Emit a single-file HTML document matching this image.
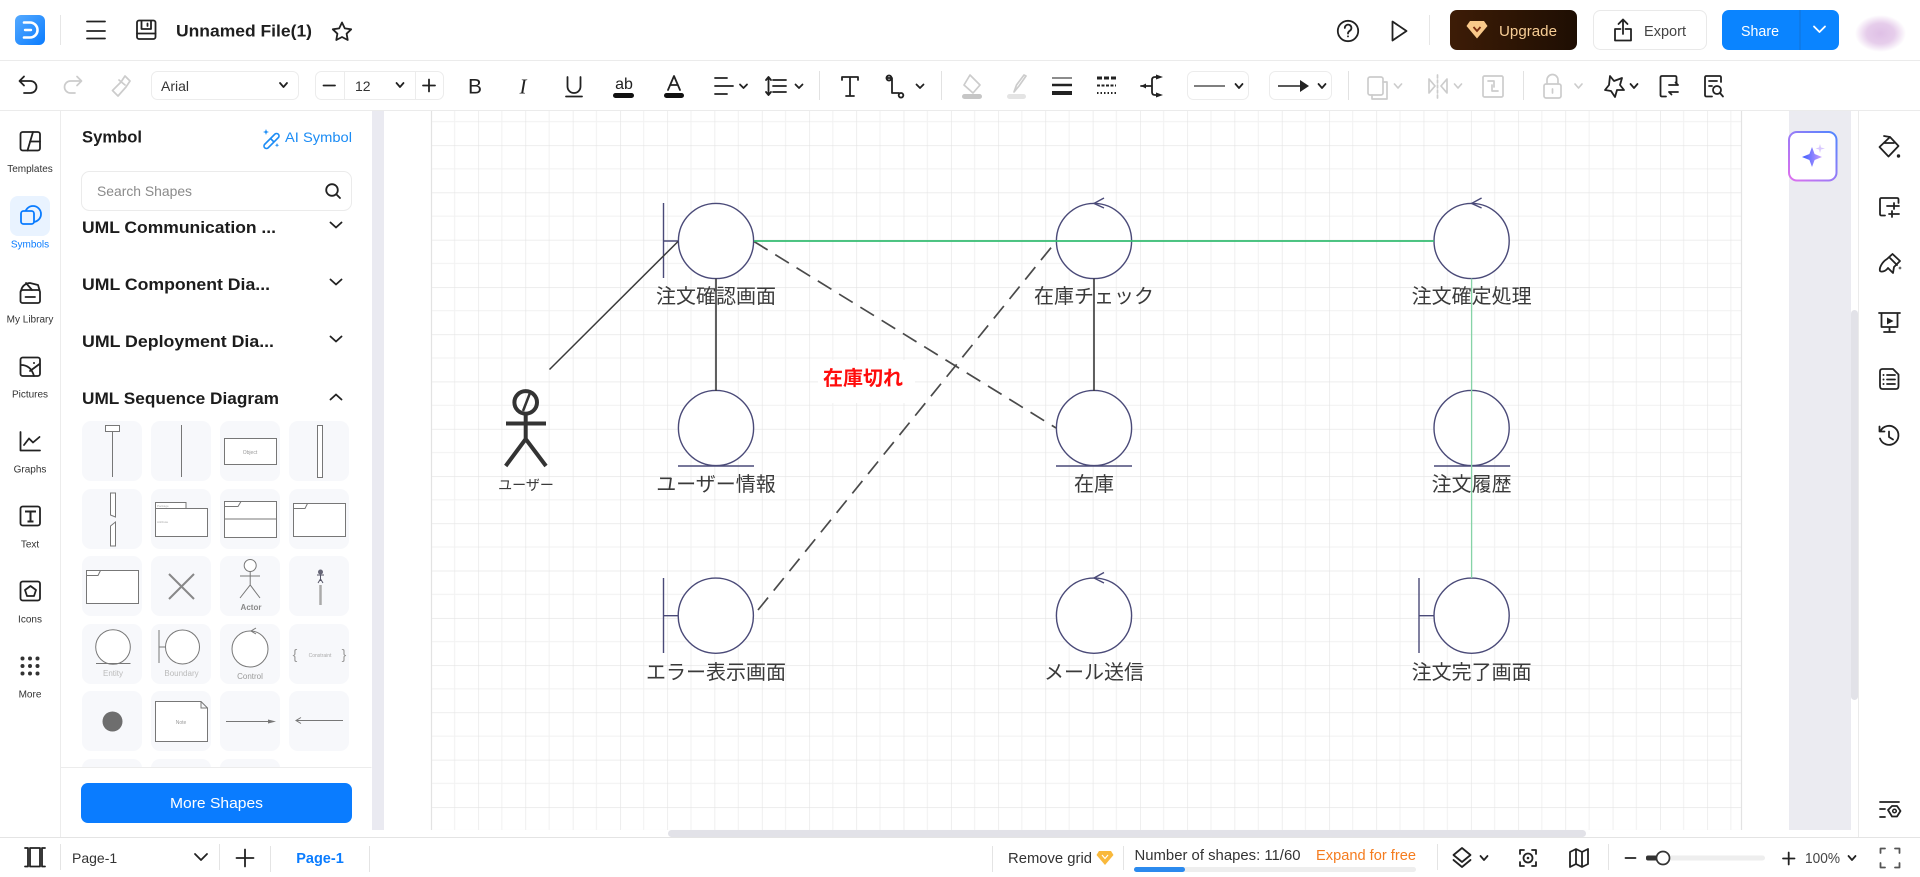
<!DOCTYPE html>
<html lang="en"><head><meta charset="utf-8"><title>Unnamed File(1)</title>
<style>
html,body{margin:0;padding:0;width:1920px;height:877px;overflow:hidden;background:#fff}
svg{display:block;position:absolute;left:0;top:0}
text{font-family:"Liberation Sans","Noto Sans CJK JP",sans-serif}
.i{fill:none;stroke:#222;stroke-width:1.8;stroke-linecap:round;stroke-linejoin:round}
.d{fill:none;stroke:#ccc;stroke-width:1.7;stroke-linecap:round;stroke-linejoin:round}
.g{fill:none;stroke:#777;stroke-width:1}
.w{fill:#fff;stroke:#777;stroke-width:1}
.s{fill:#fff;stroke:#4a4a78;stroke-width:1.4}
.sl{stroke:#4a4a78;stroke-width:1.4;fill:none}
.lb{font-size:20px;fill:#3a3a3a;text-anchor:middle}
.rl{font-size:10px;fill:#333;text-anchor:middle}
.h{font-size:17px;font-weight:700;fill:#1c1c1c}
</style></head><body>
<svg width="1920" height="877" viewBox="0 0 1920 877" xmlns="http://www.w3.org/2000/svg">
<defs>
<linearGradient id="lg" x1="0" y1="0" x2="1" y2="1"><stop offset="0" stop-color="#55aaff"/><stop offset="1" stop-color="#0a7cff"/></linearGradient>
<linearGradient id="up" x1="0" y1="0" x2="1" y2="0"><stop offset="0" stop-color="#3d1c06"/><stop offset="1" stop-color="#1e0e03"/></linearGradient>
<linearGradient id="ai" x1="1" y1="0" x2="0" y2="1"><stop offset="0" stop-color="#4f86ff"/><stop offset="1" stop-color="#e070ee"/></linearGradient>
<linearGradient id="st" x1="0" y1="0" x2="1" y2="0"><stop offset="0" stop-color="#3b5cff"/><stop offset="1" stop-color="#c9a0ff"/></linearGradient>
<radialGradient id="av"><stop offset="0" stop-color="#dfc0e6"/><stop offset=".55" stop-color="#e6cdeb"/><stop offset="1" stop-color="#fff"/></radialGradient>
<pattern id="grid" x="431" y="98" width="47.27" height="47.27" patternUnits="userSpaceOnUse">
<path d="M23.63 0V47.27M0 23.63H47.27" stroke="#f1f1f1" stroke-width="1" fill="none"/>
<path d="M0 0V47.27M0 0H47.27" stroke="#e3e3e3" stroke-width="1.2" fill="none"/>
</pattern>
<clipPath id="panelclip"><rect x="60" y="212" width="312" height="555"/></clipPath>
</defs>

<!-- canvas area -->
<rect x="372" y="111" width="12" height="719" fill="#eaeaf1"/>
<rect x="431" y="111" width="1311" height="719" fill="url(#grid)"/>
<path d="M431.5 111V830M1741.5 111V830" stroke="#e3e3e3" stroke-width="1.2"/>
<rect x="1789" y="111" width="62" height="719" fill="#ebebf1"/>
<rect x="1851" y="310" width="7" height="390" rx="3.5" fill="#e2e2e8"/>
<rect x="668" y="830" width="918" height="7" rx="3.5" fill="#e2e2e8"/>

<!-- diagram -->
<rect x="818" y="360" width="97" height="43" fill="#fff"/>
<g>
<circle class="s" cx="716" cy="241" r="37.6"/><path class="sl" d="M663.5 203V278M663.5 241H678"/>
<circle class="s" cx="716" cy="428" r="37.6"/><path class="sl" d="M678 466H754"/>
<circle class="s" cx="715.8" cy="615.7" r="37.6"/><path class="sl" d="M663.5 578V653M663.5 615.7H678"/>
<circle class="s" cx="1094" cy="241" r="37.6"/><path class="sl" d="M1104 198L1094 203.4L1104 208"/>
<circle class="s" cx="1094" cy="428" r="37.6"/><path class="sl" d="M1056 466H1132"/>
<circle class="s" cx="1094" cy="615.7" r="37.6"/><path class="sl" d="M1104 572.5L1094 578L1104 583"/>
<circle class="s" cx="1471.6" cy="241" r="37.6"/><path class="sl" d="M1481.6 198L1471.6 203.4L1481.6 208"/>
<circle class="s" cx="1471.6" cy="428" r="37.6"/><path class="sl" d="M1434 466H1510"/>
<circle class="s" cx="1471.6" cy="615.7" r="37.6"/><path class="sl" d="M1419 578V653M1419 615.7H1434"/>
</g>
<path d="M716 278.5V391M1094 278.5V391" stroke="#3a3a3a" stroke-width="1.6" fill="none"/>
<path d="M549.5 369.5L678 241.5" stroke="#3a3a3a" stroke-width="1.5" fill="none"/>
<path d="M754 241.5L1056 428M758 610L1056 241.5" stroke="#4a4a4a" stroke-width="1.7" stroke-dasharray="16 9" fill="none"/>
<path d="M754 241H1434" stroke="#35bd72" stroke-width="1.7" fill="none"/>
<path d="M1471.6 278.5V578" stroke="#86d3a7" stroke-width="1.3" fill="none"/>
<g fill="none" stroke="#333" stroke-width="4">
<circle cx="525.7" cy="402.4" r="11.3"/><path d="M530 393L523 411" stroke-width="2.5"/>
<path d="M525.7 414V439M506 423.5H546M505.7 466L525.7 439L546 466"/>
</g>
<text class="lb" x="716" y="303">注文確認画面</text>
<text class="lb" x="1094" y="303">在庫チェック</text>
<text class="lb" x="1471.6" y="303">注文確定処理</text>
<text class="lb" x="716" y="491">ユーザー情報</text>
<text class="lb" x="1094" y="491">在庫</text>
<text class="lb" x="1471.6" y="491">注文履歴</text>
<text class="lb" x="716" y="679">エラー表示画面</text>
<text class="lb" x="1094" y="679">メール送信</text>
<text class="lb" x="1471.6" y="679">注文完了画面</text>
<text x="526" y="490" font-size="14" fill="#3a3a3a" text-anchor="middle">ユーザー</text>
<text x="863" y="385" font-size="20" font-weight="700" fill="#ff0c0c" text-anchor="middle">在庫切れ</text>

<!-- AI button -->
<rect x="1789" y="132" width="47.5" height="48.5" rx="8" fill="#fff" stroke="url(#ai)" stroke-width="2"/>
<path d="M1812 147L1814.6 154L1822 157L1814.6 160L1812 167L1809.4 160L1802 157L1809.4 154Z" fill="url(#st)"/>
<path d="M1820 144L1821 147.5L1825 148.5L1821 149.5L1820 153L1819 149.5L1815.5 148.5L1819 147.5Z" fill="#d9c8ff"/>

<!-- top bar -->
<path d="M0 60.5H1920" stroke="#ebebeb"/>
<rect x="15" y="15" width="30" height="30" rx="6" fill="url(#lg)"/>
<path d="M24 22.5H30a7.5 7.5 0 0 1 0 15H24" fill="none" stroke="#fff" stroke-width="2.6" stroke-linecap="round"/>
<path d="M25 30H31" stroke="#fff" stroke-width="2.4" stroke-linecap="round"/>
<path d="M60.5 15V45M1429.5 15V45" stroke="#e6e6e6"/>
<path class="i" d="M87 21.5H105M87 31H105M87 38.5H105"/>
<rect class="i" x="137" y="20.5" width="18.5" height="18.5" rx="2"/>
<path class="i" d="M141.5 21V29H151V21M147.5 23.5V26M137 33.5H155.5"/>
<text x="176" y="36.5" font-size="17" font-weight="700" fill="#1f1f1f" textLength="136" lengthAdjust="spacingAndGlyphs">Unnamed File(1)</text>
<path class="i" stroke-width="1.5" d="M342 22.5L344.8 28.4L351.2 29.3L346.6 33.7L347.7 40L342 37L336.3 40L337.4 33.7L332.8 29.3L339.2 28.4Z"/>
<circle class="i" cx="1348" cy="31" r="10.2"/>
<path class="i" d="M1344.8 28a3.3 3.3 0 1 1 5 2.8c-1.2.8-1.8 1.3-1.8 2.8M1348 36.3v.2"/>
<path class="i" d="M1392.5 21.5L1406.5 31L1392.5 40.5Z"/>
<rect x="1450" y="10" width="127" height="40" rx="7" fill="url(#up)"/>
<path d="M1470 21H1484L1487.5 26L1477 38.5L1466.5 26Z" fill="#f9c98a"/>
<path d="M1473.5 27L1477 31L1480.5 27" stroke="#7a2d10" stroke-width="1.8" fill="none"/>
<text x="1499" y="36" font-size="15" fill="#f7cd95" textLength="58" lengthAdjust="spacingAndGlyphs">Upgrade</text>
<rect x="1593.5" y="10.5" width="113" height="39" rx="7" fill="#fff" stroke="#e9e9e9"/>
<path class="i" d="M1620.5 29H1615V40.5H1631V29H1625.5M1623 34V20M1618.5 24L1623 19.5L1627.5 24" stroke-width="1.5"/>
<text x="1644" y="36" font-size="15" fill="#444" textLength="42" lengthAdjust="spacingAndGlyphs">Export</text>
<rect x="1722" y="10" width="117" height="40" rx="7" fill="#0a84ff"/>
<path d="M1800 10V50" stroke="#1372d6" stroke-width="1"/>
<text x="1741" y="36" font-size="15" fill="#fff" textLength="38" lengthAdjust="spacingAndGlyphs">Share</text>
<path d="M1814 26.5L1819.5 32L1825 26.5" fill="none" stroke="#fff" stroke-width="1.8" stroke-linecap="round" stroke-linejoin="round"/>
<rect x="1855" y="15" width="51" height="37" fill="url(#av)"/>

<!-- toolbar -->
<path d="M0 110.5H1920" stroke="#ebebeb"/>
<path class="i" d="M24 77L19.5 81.5L24 86M20 81.5H30.5a6 6 0 0 1 0 12H24" transform="translate(0,-.5)"/>
<path class="d" d="M80 77L84.5 81.5L80 86M84 81.5H73.5a6 6 0 0 0 0 12H78" transform="translate(-3,-.5)"/>
<path class="d" d="M119 80L125 85M125 76L130 81L126 87L118 96L112.5 90.5L121 82Z"/>
<rect x="151.5" y="71.5" width="147" height="28" rx="6" fill="#fff" stroke="#ececec"/>
<text x="161" y="91" font-size="14" fill="#333">Arial</text>
<path class="i" stroke-width="1.2" d="M280 83L283.5 87L287 83"/>
<rect x="315.5" y="71.5" width="128" height="28" rx="6" fill="#fff" stroke="#ececec"/>
<path d="M344.5 71.5V99.5M415.5 71.5V99.5" stroke="#ececec"/>
<path class="i" stroke-width="2" d="M323.5 85.5H335M423 85.5H435M429 79.5V91.5"/>
<text x="355" y="91" font-size="14" fill="#333">12</text>
<path class="i" stroke-width="1.2" d="M396.5 83L400 87L403.5 83"/>
<text x="475" y="93.5" font-size="21" fill="#222" text-anchor="middle">B</text>
<text x="523" y="93.5" font-size="21" style="font-family:'Liberation Serif',serif" font-style="italic" fill="#222" text-anchor="middle">I</text>
<path class="i" stroke-width="1.5" d="M567.5 77V86.5a6.5 6.5 0 0 0 13 0V77M566 96.5H582"/>
<text x="624" y="89" font-size="16" fill="#222" text-anchor="middle">ab</text>
<rect x="613" y="93" width="21" height="5" rx="2.5" fill="#111"/>
<path class="i" stroke-width="1.5" d="M668 90L674 76L680 90M670.5 85H677.5"/>
<rect x="664" y="93" width="20" height="5" rx="2.5" fill="#111"/>
<path class="i" d="M715 78H727M715 86H733M715 94H727" stroke-width="1.9"/>
<path class="i" stroke-width="1.1" d="M740 84.5L743.5 88L747 84.5"/>
<path class="i" d="M773 80H786M773 86H786M773 92H786" stroke-width="1.9"/>
<path class="i" stroke-width="1.3" d="M768.5 78V94M766 80L768.5 77L771 80M766 92L768.5 95L771 92"/>
<path class="i" stroke-width="1.1" d="M795.5 84.5L799 88L802.5 84.5"/>
<path d="M819.5 71V100M941.5 71V100M1348.5 71V100M1523.5 71V100" stroke="#e2e2e2"/>
<path class="i" d="M842 80V77H858V80M850 77V96M846 96H854" stroke-width="1.7"/>
<path class="i" d="M888 78H892V93H899M889 75.5a2.5 2.5 0 1 0 .01 0M901 93a2.3 2.3 0 1 0 .01 0" stroke-width="1.7"/>
<path class="i" stroke-width="1.1" d="M916.5 84.5L920 88L923.5 84.5"/>
<path class="d" d="M970 75L980 85L973 93L964 85Z"/><rect x="962" y="94" width="20" height="5" rx="2.5" fill="#c6c6c6"/>
<path class="d" d="M1026 76L1019 86L1014 92L1016.5 85L1024 75Z"/><rect x="1007" y="94" width="19" height="5" rx="2.5" fill="#e4e4e4"/>
<path d="M1052 78H1072" stroke="#666" stroke-width="1.5"/><path d="M1052 85H1072" stroke="#222" stroke-width="2.5"/><rect x="1052" y="91" width="20" height="4" fill="#222"/>
<path d="M1097 78H1116" stroke="#222" stroke-width="3" stroke-dasharray="5 2"/>
<path d="M1097 85.5H1116" stroke="#222" stroke-width="2" stroke-dasharray="3 1.5"/>
<path d="M1097 93H1116" stroke="#222" stroke-width="2" stroke-dasharray="1.5 2"/>
<path class="i" d="M1159 77H1155Q1152 77 1152 80V92Q1152 95 1155 95H1159M1141 86H1152" stroke-width="1.5"/>
<path d="M1156 74.5L1163 77L1156 79.5ZM1156 92.5L1163 95L1156 97.5ZM1146 83.5V88.5L1141 86Z" fill="#222"/>
<rect x="1187.5" y="71.5" width="61" height="28" rx="6" fill="#fff" stroke="#ececec"/>
<path d="M1194 86H1225" stroke="#555" stroke-width="1.6"/>
<path class="i" stroke-width="1.2" d="M1235.5 84L1239 88L1242.5 84"/>
<rect x="1269.5" y="71.5" width="62" height="28" rx="6" fill="#fff" stroke="#ececec"/>
<path d="M1278 86H1302" stroke="#222" stroke-width="1.6"/><path d="M1300 80L1309 86L1300 92Z" fill="#222"/>
<path class="i" stroke-width="1.2" d="M1318.5 84L1322 88L1325.5 84"/>
<rect class="d" x="1368" y="77" width="15" height="18" rx="2"/><path class="d" d="M1372 95V99H1387V82H1383"/>
<path class="d" stroke-width="1.2" d="M1394.5 84L1398 88L1401.5 84"/>
<path class="d" d="M1437.5 75V98" stroke-dasharray="3 2"/><path class="d" d="M1429 79V93L1435 86ZM1447 79V93L1441 86Z"/>
<path class="d" stroke-width="1.2" d="M1454.5 84L1458 88L1461.5 84"/>
<rect class="d" x="1483" y="76" width="20" height="21" rx="1.5"/><path class="d" d="M1488 81H1494V87M1498 91H1492V85"/>
<rect class="d" x="1544" y="84" width="17" height="14" rx="2"/><path class="d" d="M1547 84V80a5.5 5.5 0 0 1 11 0V84M1552.5 89V93"/>
<path class="d" stroke-width="1.2" d="M1575 84L1578.5 88L1582 84"/>
<path class="i" stroke-width="1.6" d="M1610 76L1614 81L1622 78L1620 85L1624 90L1617 90L1615 97L1611 91L1605 90L1609 85Z"/>
<path class="i" stroke-width="1.2" d="M1630.5 84L1634 88L1637.5 84"/>
<path class="i" stroke-width="1.6" d="M1676.5 85V77.5Q1676.5 76 1675 76H1662Q1660.5 76 1660.5 77.5V95Q1660.5 96.5 1662 96.5H1666M1669 85H1678M1675.5 82.5L1678 85M1678 92H1669M1671.5 94.5L1669 92"/>
<path class="i" stroke-width="1.6" d="M1721 82V77.5Q1721 76 1719.5 76H1706.5Q1705 76 1705 77.5V95Q1705 96.5 1706.5 96.5H1712M1709 81H1717M1709 86H1712"/>
<circle class="i" stroke-width="1.6" cx="1717" cy="90" r="4"/><path class="i" stroke-width="1.6" d="M1720 93L1723 96.5"/>

<!-- left rail -->
<path d="M60.5 111V837" stroke="#ececec"/>
<rect class="i" x="20.5" y="132" width="19.5" height="18.5" rx="2.2"/>
<path class="i" d="M33 132L27.5 150.5M30 141.5H40"/>
<text class="rl" x="30" y="172">Templates</text>
<rect x="10" y="196" width="40" height="40" rx="8" fill="#e9f3ff"/>
<circle cx="33" cy="214" r="8" fill="none" stroke="#0a7cff" stroke-width="1.8"/>
<rect x="21" y="211" width="13" height="13" rx="2.5" fill="#e9f3ff" stroke="#0a7cff" stroke-width="1.8"/>
<text class="rl" x="30" y="247.5" style="fill:#0a7cff">Symbols</text>
<rect class="i" x="20.5" y="290" width="19.5" height="13" rx="2"/>
<path class="i" d="M21 291C22 285 27 283 30 283L38 285L39.5 290M26 283L32 290M25.5 297H35"/>
<text class="rl" x="30" y="322.5">My Library</text>
<rect class="i" x="20.5" y="357.5" width="19.5" height="18.5" rx="2.2"/>
<path class="i" d="M21 365C28 365 32 369 34 376M30 371L39.5 364"/><circle cx="34" cy="363" r="1" fill="#222"/>
<text class="rl" x="30" y="397.5">Pictures</text>
<path class="i" d="M20.5 432V450.5H40M24 445L29 438.5L33 442.5L39.5 437"/>
<text class="rl" x="30" y="472.5">Graphs</text>
<rect class="i" x="20.5" y="506.5" width="19.5" height="19" rx="2.2"/>
<path d="M25 511.5H36M30.5 511.5V521.5M27.5 521.5H33.5" stroke="#222" stroke-width="2" fill="none"/>
<text class="rl" x="30" y="547.5">Text</text>
<rect class="i" x="20.5" y="581.5" width="19.5" height="19" rx="2.2"/>
<path class="i" d="M30.5 586L36 590L34 596H27L25 590Z"/>
<text class="rl" x="30" y="622.5">Icons</text>
<g fill="#333"><circle cx="22.5" cy="658.5" r="2"/><circle cx="30" cy="658.5" r="2"/><circle cx="37.5" cy="658.5" r="2"/><circle cx="22.5" cy="666" r="2"/><circle cx="30" cy="666" r="2"/><circle cx="37.5" cy="666" r="2"/><circle cx="22.5" cy="673.5" r="2"/><circle cx="30" cy="673.5" r="2"/><circle cx="37.5" cy="673.5" r="2"/></g>
<text class="rl" x="30" y="697.5">More</text>

<!-- panel -->
<text class="h" x="82" y="142.5" textLength="60" lengthAdjust="spacingAndGlyphs">Symbol</text>
<path d="M264.5 144.5L275 134a2.5 2.5 0 0 1 3.5 3.5L268 148a2.5 2.5 0 0 1-3.5-3.5ZM270.5 138.5L274 142" fill="none" stroke="#1b8cf5" stroke-width="1.6"/>
<path d="M266 129l.8 2.2 2.2.8-2.2.8-.8 2.2-.8-2.2-2.2-.8 2.2-.8ZM277 143l.6 1.6 1.6.6-1.6.6-.6 1.6-.6-1.6-1.6-.6 1.6-.6Z" fill="#1b8cf5"/>
<text x="285" y="142" font-size="14" fill="#1b8cf5" textLength="67" lengthAdjust="spacingAndGlyphs">AI Symbol</text>
<rect x="81.5" y="171.5" width="270" height="39" rx="8" fill="#fff" stroke="#ebebeb"/>
<text x="97" y="196" font-size="14" fill="#8a8a8a" textLength="95" lengthAdjust="spacingAndGlyphs">Search Shapes</text>
<circle class="i" cx="332" cy="190" r="5.8"/><path class="i" d="M336.5 194.5L340 198"/>
<text class="h" x="82" y="233" textLength="194" lengthAdjust="spacingAndGlyphs">UML Communication ...</text>
<text class="h" x="82" y="290" textLength="188" lengthAdjust="spacingAndGlyphs">UML Component Dia...</text>
<text class="h" x="82" y="347" textLength="192" lengthAdjust="spacingAndGlyphs">UML Deployment Dia...</text>
<text class="h" x="82" y="404" textLength="197" lengthAdjust="spacingAndGlyphs">UML Sequence Diagram</text>
<path class="i" d="M330.5 222.5L336 227.5L341.5 222.5M330.5 279.5L336 284.5L341.5 279.5M330.5 336.5L336 341.5L341.5 336.5M330.5 399.5L336 394.5L341.5 399.5"/>
<g fill="#f7f8fb">
<rect x="82" y="421" width="60" height="60" rx="9"/><rect x="151" y="421" width="60" height="60" rx="9"/><rect x="220" y="421" width="60" height="60" rx="9"/><rect x="289" y="421" width="60" height="60" rx="9"/>
<rect x="82" y="489" width="60" height="60" rx="9"/><rect x="151" y="489" width="60" height="60" rx="9"/><rect x="220" y="489" width="60" height="60" rx="9"/><rect x="289" y="489" width="60" height="60" rx="9"/>
<rect x="82" y="556" width="60" height="60" rx="9"/><rect x="151" y="556" width="60" height="60" rx="9"/><rect x="220" y="556" width="60" height="60" rx="9"/><rect x="289" y="556" width="60" height="60" rx="9"/>
<rect x="82" y="624" width="60" height="60" rx="9"/><rect x="151" y="624" width="60" height="60" rx="9"/><rect x="220" y="624" width="60" height="60" rx="9"/><rect x="289" y="624" width="60" height="60" rx="9"/>
<rect x="82" y="691" width="60" height="60" rx="9"/><rect x="151" y="691" width="60" height="60" rx="9"/><rect x="220" y="691" width="60" height="60" rx="9"/><rect x="289" y="691" width="60" height="60" rx="9"/>
<g clip-path="url(#panelclip)"><rect x="82" y="759" width="60" height="60" rx="9"/><rect x="151" y="759" width="60" height="60" rx="9"/><rect x="220" y="759" width="60" height="60" rx="9"/></g>
</g>
<!-- tile art -->
<rect class="w" x="105.5" y="425.5" width="14" height="6"/><path class="g" d="M112.5 431.5V477"/>
<path class="g" d="M181.5 425V477"/>
<rect class="w" x="224.5" y="438.5" width="52" height="26"/><text x="250" y="454" font-size="5" fill="#999" text-anchor="middle">Object</text>
<rect class="w" x="317.5" y="425.5" width="5" height="52"/>
<path class="w" d="M110.5 493H115.5V517L110.5 515ZM110.5 526L115.5 522V546H110.5Z"/>
<path class="w" d="M155.5 502.5H186V508.5H207.5V536.5H155.5Z"/><path class="g" d="M155.5 508.5H186"/>
<text x="157" y="507" font-size="3" fill="#aaa">Package</text><text x="157" y="523" font-size="3" fill="#aaa">Attribute</text>
<rect class="w" x="224.5" y="501.5" width="52" height="36"/><path class="g" d="M224.5 519H276.5M224.5 506.5H238L241 501.5"/>
<rect class="w" x="293.5" y="503.5" width="52" height="33"/><path class="g" d="M293.5 508.5H305L307.5 503.5"/>
<rect class="w" x="86.5" y="570.5" width="52" height="33"/><path class="g" d="M86.5 575.5H98L100.5 570.5"/>
<path d="M169 574L194 599M194 574L169 599" stroke="#888" stroke-width="2" fill="none"/>
<circle class="w" cx="250.2" cy="565.5" r="6"/><path class="g" d="M250.2 571.5V585M240 576H260M240 598L250.2 585L260 598"/>
<text x="251" y="610" font-size="8" font-weight="700" fill="#888" text-anchor="middle">Actor</text>
<path d="M320.5 585V605" stroke="#aaa" stroke-width="2.5"/><circle cx="320.5" cy="572" r="2.5" fill="#667"/><path d="M317 575H324M320.5 575V581M318 583L320.5 579L323 583" stroke="#556" stroke-width="1" fill="none"/>
<circle class="w" cx="113" cy="647" r="17.3"/><path class="g" d="M96 663.5H130.5"/><text x="113" y="676" font-size="8" fill="#bbb" text-anchor="middle">Entity</text>
<circle class="w" cx="182.5" cy="647" r="17"/><path class="g" d="M159 630V663M159 647H166"/><text x="181.5" y="676" font-size="8" fill="#bbb" text-anchor="middle">Boundary</text>
<circle class="w" cx="250" cy="649" r="18"/><path class="g" d="M256 628L251 631L256 634"/><text x="250" y="679" font-size="8" fill="#999" text-anchor="middle">Control</text>
<text x="295" y="659" font-size="14" fill="#999" text-anchor="middle">{</text><text x="344" y="659" font-size="14" fill="#999" text-anchor="middle">}</text><text x="320" y="657" font-size="5" fill="#aaa" text-anchor="middle">Constraint</text>
<circle cx="112.5" cy="721.5" r="10" fill="#6e6e6e"/>
<path class="w" d="M155.5 701.5H201L207.5 708V741.5H155.5ZM201 701.5V708H207.5"/><text x="181" y="724" font-size="5" fill="#999" text-anchor="middle">Note</text>
<path class="g" d="M226 721.5H272"/><path d="M268 719.5L276 721.5L268 723.5Z" fill="#777"/>
<path class="g" d="M296 720.5H343M301 717.5L296 720.5L301 723.5"/>
<rect x="60.5" y="767" width="311" height="1" fill="#ececec"/>
<rect x="81" y="783" width="271" height="40" rx="7" fill="#0a7cff"/>
<text x="216.5" y="808" font-size="15" fill="#fff" text-anchor="middle" textLength="93" lengthAdjust="spacingAndGlyphs">More Shapes</text>

<!-- right rail -->
<path d="M1858.5 111V837" stroke="#ebebeb"/>
<path class="i" d="M1879.5 147L1890 137L1898.5 146L1888.5 156.5ZM1884 143L1894 143M1884 136L1890 137"/>
<circle cx="1898.5" cy="156" r="1.7" fill="#222"/>
<path class="i" d="M1898.5 203V199.5Q1898.5 198 1897 198H1881.5Q1880 198 1880 199.5V214Q1880 215.5 1881.5 215.5H1885M1887 206H1899M1894 203V209M1889 214H1899M1892 211V217"/>
<path class="i" d="M1887 259L1892.5 254L1900 261L1894 267L1893 273L1888 268C1885 272 1881 272 1880 271C1879 268 1882 262 1887 259ZM1890 258L1897 265"/>
<path d="M1900 266l.5 1.5 1.5.5-1.5.5-.5 1.5-.5-1.5-1.5-.5 1.5-.5Z" fill="#222"/>
<path class="i" d="M1879 313H1900M1881.5 313V327H1897.5V313M1889.5 327V331M1884 332H1895"/><path d="M1887 317.5L1893.5 321L1887 324.5Z" fill="#222"/>
<path class="i" d="M1880 371.5Q1880 369 1882.500 369H1893L1898.5 374.5V386Q1898.5 389 1896 389H1882.5Q1880 389 1880 386ZM1887 375H1895M1887 379.5H1895M1887 384H1895"/>
<circle cx="1883.5" cy="375" r="1" fill="#222"/><circle cx="1883.5" cy="379.5" r="1" fill="#222"/><circle cx="1883.5" cy="384" r="1" fill="#222"/>
<path class="i" d="M1880.5 431A9.5 9.5 0 1 1 1880 438.5M1879.5 426.5V431.5H1884.5M1889 431.5V437L1893 439.5"/>
<path class="i" d="M1880 802H1899M1880 809H1885M1880 817H1885"/>
<path class="i" d="M1888 810L1892 806H1897L1900.5 811L1897 816.5H1892Z"/>
<circle cx="1894.5" cy="811" r="1.8" fill="none" stroke="#222" stroke-width="1.5"/>

<!-- bottom bar -->
<path d="M0 837.5H1920" stroke="#e4e4e4"/>
<path d="M60.5 844V870M219.5 844V870M270.5 846V872M369.5 846V872M992.5 846V872M1123.5 846V870M1437.5 844V870M1608.5 844V870" stroke="#e4e4e4"/>
<rect class="i" x="30" y="848" width="10" height="18.5" stroke-width="1.5"/>
<path class="i" stroke-width="1.5" d="M25 848H28V866.5H25M45 848H42V866.5H45"/>
<text x="72" y="863" font-size="14" fill="#333">Page-1</text>
<path class="i" d="M195 854L201 860L207 854"/>
<path class="i" stroke-width="1.8" d="M236.5 858H253.5M245 849.5V866.5"/>
<text x="320" y="863" font-size="14.5" font-weight="700" fill="#0a7cff" text-anchor="middle">Page-1</text>
<text x="1008" y="863" font-size="14.5" fill="#333" textLength="84" lengthAdjust="spacingAndGlyphs">Remove grid</text>
<path d="M1099 851H1111L1113.5 855L1105 865L1096.5 855Z" fill="#f9b93c"/><path d="M1102 855L1105 858.5L1108 855" stroke="#fff" stroke-width="1.2" fill="none"/>
<text x="1134.5" y="860" font-size="14.5" fill="#333" textLength="166" lengthAdjust="spacingAndGlyphs">Number of shapes: 11/60</text>
<text x="1316" y="860" font-size="14.5" fill="#f57c1f" textLength="100" lengthAdjust="spacingAndGlyphs">Expand for free</text>
<rect x="1134" y="867" width="282" height="5" rx="2.5" fill="#eeeeee"/>
<rect x="1134" y="867" width="51" height="5" rx="2.5" fill="#2b8aee"/>
<path class="i" d="M1462 848L1470.5 855L1462 862L1453.5 855ZM1453.5 860L1462 867L1470.5 860"/>
<path class="i" stroke-width="1.2" d="M1480.5 856L1484 860L1487.5 856"/>
<path class="i" d="M1520 854V850H1524M1532 850H1536V854M1536 862V866H1532M1524 866H1520V862"/>
<circle class="i" cx="1528" cy="858" r="4.5"/><circle cx="1528" cy="858" r="1.3" fill="#222"/>
<path class="i" d="M1570 852L1576 849L1582 852L1588 849V864L1582 867L1576 864L1570 867ZM1576 849V864M1582 852V867"/>
<path class="i" stroke-width="2.2" d="M1625.5 858H1635.5"/>
<rect x="1646" y="855.5" width="119" height="5" rx="2.5" fill="#eeeeee"/>
<rect x="1646" y="855.5" width="12" height="5" rx="2" fill="#333"/>
<circle cx="1663" cy="858" r="6.5" fill="#fff" stroke="#333" stroke-width="1.7"/>
<path class="i" stroke-width="2.2" d="M1783 858.5H1794.5M1788.7 852.5V864.5"/>
<text x="1805" y="863" font-size="14.5" fill="#444" textLength="35" lengthAdjust="spacingAndGlyphs">100%</text>
<path class="i" stroke-width="1.2" d="M1848.5 856L1852 860L1855.5 856"/>
<path class="i" style="stroke:#555" d="M1880.5 853V848.5H1885M1895 848.5H1899.5V853M1899.5 863V867.5H1895M1885 867.5H1880.5V863"/>
</svg>
</body></html>
